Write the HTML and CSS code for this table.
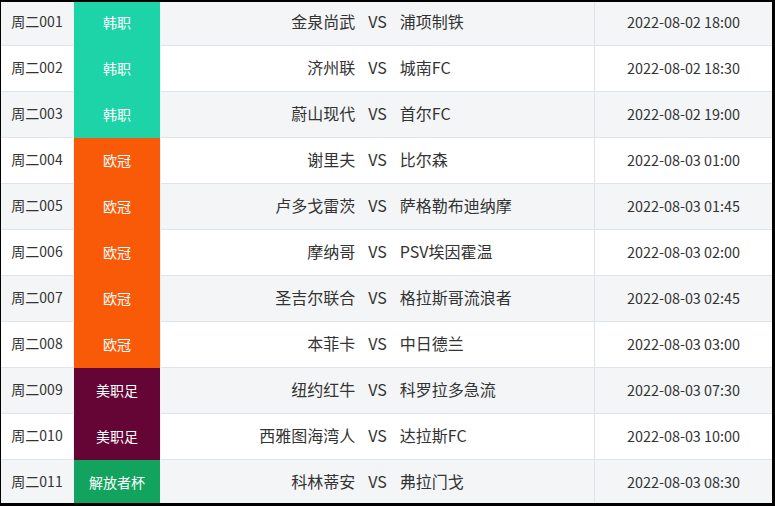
FILE: index.html
```html
<!DOCTYPE html>
<html lang="zh">
<head>
<meta charset="utf-8">
<link rel="stylesheet" href="styles.css">
</head>
<body>
<div class="frame">
  <div class="table">
    <div class="row odd"><div class="no">周二001</div><div class="lg kr">韩职</div><div class="match"><span class="home">金泉尚武</span><span class="vs">VS</span><span class="away">浦项制铁</span></div><div class="time">2022-08-02 18:00</div></div>
    <div class="row"><div class="no">周二002</div><div class="lg kr">韩职</div><div class="match"><span class="home">济州联</span><span class="vs">VS</span><span class="away">城南FC</span></div><div class="time">2022-08-02 18:30</div></div>
    <div class="row odd"><div class="no">周二003</div><div class="lg kr">韩职</div><div class="match"><span class="home">蔚山现代</span><span class="vs">VS</span><span class="away">首尔FC</span></div><div class="time">2022-08-02 19:00</div></div>
    <div class="row"><div class="no">周二004</div><div class="lg ucl">欧冠</div><div class="match"><span class="home">谢里夫</span><span class="vs">VS</span><span class="away">比尔森</span></div><div class="time">2022-08-03 01:00</div></div>
    <div class="row odd"><div class="no">周二005</div><div class="lg ucl">欧冠</div><div class="match"><span class="home">卢多戈雷茨</span><span class="vs">VS</span><span class="away">萨格勒布迪纳摩</span></div><div class="time">2022-08-03 01:45</div></div>
    <div class="row"><div class="no">周二006</div><div class="lg ucl">欧冠</div><div class="match"><span class="home">摩纳哥</span><span class="vs">VS</span><span class="away">PSV埃因霍温</span></div><div class="time">2022-08-03 02:00</div></div>
    <div class="row odd"><div class="no">周二007</div><div class="lg ucl">欧冠</div><div class="match"><span class="home">圣吉尔联合</span><span class="vs">VS</span><span class="away">格拉斯哥流浪者</span></div><div class="time">2022-08-03 02:45</div></div>
    <div class="row"><div class="no">周二008</div><div class="lg ucl">欧冠</div><div class="match"><span class="home">本菲卡</span><span class="vs">VS</span><span class="away">中日德兰</span></div><div class="time">2022-08-03 03:00</div></div>
    <div class="row odd"><div class="no">周二009</div><div class="lg mls">美职足</div><div class="match"><span class="home">纽约红牛</span><span class="vs">VS</span><span class="away">科罗拉多急流</span></div><div class="time">2022-08-03 07:30</div></div>
    <div class="row"><div class="no">周二010</div><div class="lg mls">美职足</div><div class="match"><span class="home">西雅图海湾人</span><span class="vs">VS</span><span class="away">达拉斯FC</span></div><div class="time">2022-08-03 10:00</div></div>
    <div class="row odd"><div class="no">周二011</div><div class="lg lib">解放者杯</div><div class="match"><span class="home">科林蒂安</span><span class="vs">VS</span><span class="away">弗拉门戈</span></div><div class="time">2022-08-03 08:30</div></div>
  </div>
</div>
</body>
</html>
```
FILE: styles.css
```css
html, body {
  margin: 0;
  padding: 0;
  background: #000;
}
body {
  width: 775px;
  height: 506px;
  overflow: hidden;
  font-family: "Noto Sans CJK SC", "Noto Sans", sans-serif;
  color: #333;
}
.frame {
  margin: 2px 3px 0 1px;
  height: 501px;
  overflow: hidden;
  background: #fff;
}
.table {
  margin-top: -2px;
}
.row {
  display: grid;
  grid-template-columns: 72px 88px 434px 177px;
  height: 46px;
  box-sizing: border-box;
  border-bottom: 1px solid #dfe5ec;
  background: #fff;
}
.row.odd {
  background: #f4f5f6;
}
.row > div {
  display: flex;
  align-items: center;
  justify-content: center;
  padding-bottom: 3px;
  box-sizing: border-box;
}
.no {
  font-size: 14px;
}
.lg {
  color: #fff;
  font-size: 14px;
  border-left: 1px solid #eef2f5;
  border-right: 1px solid #eef2f5;
  margin-bottom: -1px;
}
.kr { background: #1dd3a8; }
.ucl { background: #f85a08; }
.mls { background: #640536; }
.lib { background: #12a45e; }
.match {
  font-size: 16px;
  border-right: 1px solid #dde2e8;
  gap: 13px;
}
.match .home {
  flex: 1;
  text-align: right;
}
.match .away {
  flex: 1;
  text-align: left;
}
.time {
  font-size: 14.4px;
}
```
